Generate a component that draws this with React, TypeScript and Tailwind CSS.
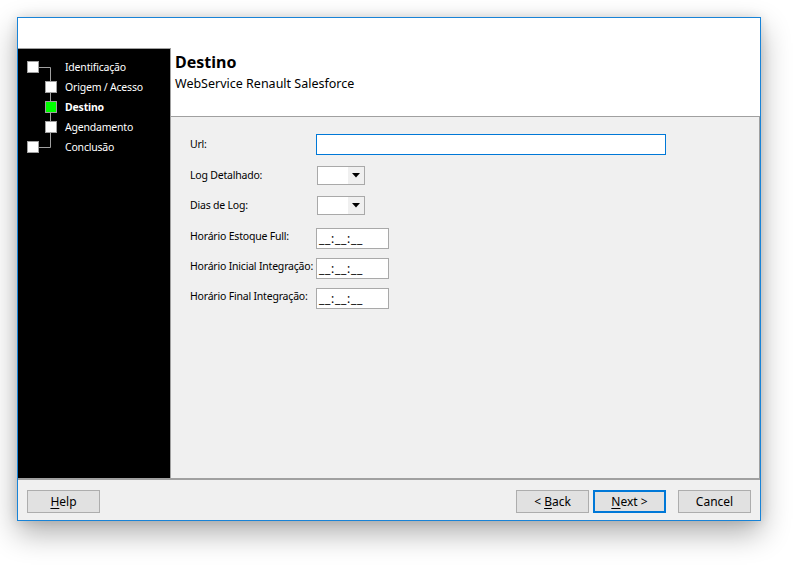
import React from "react";

const steps = [
  { label: "Identificação", level: 0 },
  { label: "Origem / Acesso", level: 1 },
  { label: "Destino", level: 1, active: true },
  { label: "Agendamento", level: 1 },
  { label: "Conclusão", level: 0 },
];

// tree drawing for the step list
const StepTree = () => (
  <svg width="47" height="100" viewBox="0 0 47 100" className="shrink-0">
    <path d="M20 10.5H32.5V90.5H20" fill="none" stroke="#a0a0a0" strokeWidth="1" />
    {steps.map((s, i) => (
      <rect
        key={s.label}
        x={s.level === 0 ? 9.5 : 27.5}
        y={i * 20 + 4.5}
        width="11"
        height="11"
        fill={s.active ? "#00ff00" : "#ffffff"}
        stroke="#a0a0a0"
        strokeWidth="1"
      />
    ))}
  </svg>
);

const Select = () => (
  <div className="flex h-[19px] w-[48px] border border-[#a9a9a9] bg-white">
    <div className="flex-1" />
    <div className="flex w-[16px] items-center justify-center bg-[#f0f0f0]">
      <svg width="8" height="5" viewBox="0 0 8 5">
        <path d="M0 0H8L4 4.5Z" fill="#000" />
      </svg>
    </div>
  </div>
);

const TimeInput = () => (
  <div className="flex h-[21px] w-[73px] items-center border border-[#a9a9a9] bg-white pl-[2px] text-[12px] leading-none tracking-[0.7px] text-black">
    __:__:__
  </div>
);

const Button = ({ children, primary }: { children: React.ReactNode; primary?: boolean }) => (
  <button
    className={
      "flex h-[23px] w-[73px] items-center justify-center bg-[#e1e1e1] text-[12px] text-black " +
      (primary ? "border-2 border-[#0078d7]" : "border border-[#adadad]")
    }
  >
    {children}
  </button>
);

export default function App() {
  return (
    <div className="min-h-screen bg-white pl-[17px] pt-[17px] font-['Noto_Sans',sans-serif]">
      <div className="flex h-[504px] w-[744px] flex-col border border-[#1883d7] bg-white shadow-[0_12px_28px_rgba(0,0,0,0.32),0_0_10px_rgba(0,0,0,0.12)]">
        {/* top band */}
        <div className="h-[30px] bg-white" />

        {/* main */}
        <div className="flex h-[430px]">
          {/* steps */}
          <div className="w-[153px] border-r border-t border-[#a0a0a0] bg-black pt-[8px]">
            <div className="flex">
              <StepTree />
              <div className="flex flex-col">
                {steps.map((s) => (
                  <div
                    key={s.label}
                    className={
                      "h-[20px] text-[10.5px] leading-[20px] tracking-[-0.2px] text-white " +
                      (s.active ? "font-bold" : "")
                    }
                  >
                    {s.label}
                  </div>
                ))}
              </div>
            </div>
          </div>

          <div className="flex flex-1 flex-col">
            {/* header */}
            <div className="h-[69px] border-b border-[#a0a0a0] bg-white pl-[4px] pt-[4px]">
              <div className="text-[16px] font-bold leading-[20px] text-black">Destino</div>
              <div className="mt-[4px] text-[12.5px] leading-[16px] text-black">WebService Renault Salesforce</div>
            </div>

            {/* form */}
            <div className="flex-1 border-r border-[#a0a0a0] bg-[#f0f0f0] pl-[19px] pt-[17px] text-[10.5px] tracking-[-0.2px] text-black">
              <div className="flex h-[21px] items-center">
                <div className="w-[126px] pt-[1px]">Url:</div>
                <div className="h-[21px] w-[350px] border border-[#0078d7] bg-white" />
              </div>
              <div className="mt-[10px] flex h-[21px] items-center">
                <div className="w-[127px]">Log Detalhado:</div>
                <Select />
              </div>
              <div className="mt-[9px] flex h-[21px] items-center">
                <div className="w-[127px]">Dias de Log:</div>
                <Select />
              </div>
              <div className="mt-[12px] flex h-[21px] items-center">
                <div className="w-[126px] pb-[4px]">Horário Estoque Full:</div>
                <TimeInput />
              </div>
              <div className="mt-[9px] flex h-[21px] items-center">
                <div className="w-[126px] whitespace-nowrap pb-[4px]">Horário Inicial Integração:</div>
                <TimeInput />
              </div>
              <div className="mt-[9px] flex h-[21px] items-center">
                <div className="w-[126px] whitespace-nowrap pb-[4px]">Horário Final Integração:</div>
                <TimeInput />
              </div>
            </div>
          </div>
        </div>

        <div className="h-[2px] bg-[#a0a0a0]" />

        {/* footer */}
        <div className="flex h-[40px] items-start bg-[#f0f0f0] pl-[9px] pr-[9px] pt-[10px]">
          <Button>
            <u className="underline-offset-2">H</u>elp
          </Button>
          <div className="flex-1" />
          <Button>
            &lt;&nbsp;<u className="underline-offset-2">B</u>ack
          </Button>
          <div className="w-[4px]" />
          <Button primary>
            <u className="underline-offset-2">N</u>ext &gt;
          </Button>
          <div className="w-[12px]" />
          <Button>Cancel</Button>
        </div>
      </div>
    </div>
  );
}
